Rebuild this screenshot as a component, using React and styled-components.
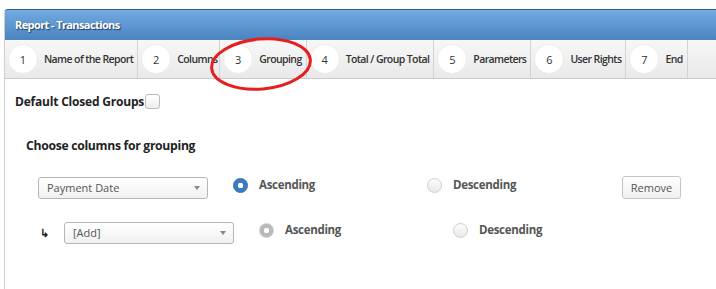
import React from 'react'
import styled, { createGlobalStyle } from 'styled-components'

const GlobalStyle = createGlobalStyle`
    html, body {
        margin: 0;
        background: #ffffff;
        font-family: "Open Sans", "Noto Sans", sans-serif;
    }
`

const steps = [
    { n: 1, label: 'Name of the Report' },
    { n: 2, label: 'Columns', clip: true },
    { n: 3, label: 'Grouping' },
    { n: 4, label: 'Total / Group Total' },
    { n: 5, label: 'Parameters' },
    { n: 6, label: 'User Rights' },
    { n: 7, label: 'End' },
]

function Radio({ checked, disabled, label }) {
    return (
        <RadioGroup>
            <RadioDot $checked={checked} $disabled={disabled} />
            <RadioLabel>{label}</RadioLabel>
        </RadioGroup>
    )
}

function SelectBox({ value }) {
    return (
        <Select>
            <span>{value}</span>
            <Caret />
        </Select>
    )
}

function App() {
    return (
        <Page>
            <GlobalStyle />
            <Panel>
                <Header>Report - Transactions</Header>
                <Steps>
                    {steps.map((s) => (
                        <Step key={s.n} $clip={s.clip}>
                            <StepNumber>{s.n}</StepNumber>
                            <StepLabel>{s.label}</StepLabel>
                        </Step>
                    ))}
                </Steps>
                <Content>
                    <CheckLine>
                        Default Closed Groups
                        <CheckBox />
                    </CheckLine>
                    <SectionTitle>Choose columns for grouping</SectionTitle>
                    <GroupRow>
                        <SelectBox value="Payment Date" />
                        <Radio checked label="Ascending" />
                        <Radio label="Descending" />
                        <Button>Remove</Button>
                    </GroupRow>
                    <GroupRow $indent>
                        <Arrow>↳</Arrow>
                        <SelectBox value="[Add]" />
                        <Radio checked disabled label="Ascending" />
                        <Radio disabled label="Descending" />
                    </GroupRow>
                </Content>
            </Panel>
            <Mark viewBox="0 0 110 60" width="110" height="60">
                <ellipse cx="55" cy="30" rx="49.5" ry="25" fill="none" stroke="#e3201f" strokeWidth="3" transform="rotate(-5 55 30)" />
            </Mark>
        </Page>
    )
}

const Page = styled.div`
    position: relative;
    padding: 9px 0 0 4px;
    height: 280px;
    overflow: hidden;
`

const Panel = styled.div`
    border-left: 1px solid #cfcfcf;
    border-top-left-radius: 3px;
    height: 100%;
`

const Header = styled.div`
    height: 30px;
    border-top: 1px solid #3a5f86;
    border-top-left-radius: 3px;
    background: linear-gradient(#72aae2, #4a84c0);
    color: #fff;
    font-size: 11px;
    font-weight: 700;
    line-height: 30px;
    padding-left: 10px;
    text-shadow: 1px 1px 1px #1d3c5c;
    letter-spacing: -0.6px;
`

const Steps = styled.div`
    display: flex;
    height: 38px;
    background: linear-gradient(#f7f7f7, #e9e9e9);
    border-bottom: 1px solid #cdcdcd;
`

const Step = styled.div`
    display: flex;
    align-items: center;
    gap: 6px;
    padding: 0 4px 0 3px;
    border-right: 1px solid #d3d3d3;
    ${(p) => p.$clip && 'width: 74px; overflow: hidden; white-space: nowrap;'}
`

const StepNumber = styled.div`
    width: 30px;
    height: 30px;
    flex: none;
    border-radius: 50%;
    background: #fff;
    border: 1px solid #ececec;
    box-sizing: border-box;
    display: flex;
    align-items: center;
    justify-content: center;
    font-size: 11px;
    color: #333;
`

const StepLabel = styled.span`
    font-size: 10.5px;
    font-weight: 600;
    color: #333;
    letter-spacing: -0.6px;
    white-space: nowrap;
`

const Content = styled.div`
    padding: 14px 0 0 10px;
`

const CheckLine = styled.div`
    display: flex;
    align-items: center;
    font-size: 12px;
    font-weight: 700;
    color: #222;
    letter-spacing: -0.2px;
    height: 16px;
`

const CheckBox = styled.span`
    width: 15px;
    height: 15px;
    margin-left: 1px;
    border: 1px solid #bbb;
    border-radius: 3px;
    background: linear-gradient(#fff, #eee);
    box-sizing: border-box;
`

const SectionTitle = styled.div`
    margin: 28px 0 0 11px;
    font-size: 12.2px;
    font-weight: 700;
    color: #222;
    letter-spacing: -0.3px;
`

const GroupRow = styled.div`
    display: flex;
    align-items: center;
    height: 23px;
    margin-top: 22px;
    padding-left: ${(p) => (p.$indent ? '25px' : '23px')};
`

const Arrow = styled.span`
    width: 24px;
    flex: none;
    font-size: 11px;
    font-weight: 700;
    color: #222;
`

const Select = styled.div`
    width: 170px;
    height: 22px;
    box-sizing: border-box;
    flex: none;
    display: flex;
    align-items: center;
    justify-content: space-between;
    padding: 0 7px 0 8px;
    border: 1px solid #b5b5b5;
    border-radius: 3px;
    background: linear-gradient(#fff, #f1f1f1);
    font-size: 11px;
    color: #555;
`

const Caret = styled.span`
    width: 0;
    height: 0;
    border-left: 3px solid transparent;
    border-right: 3px solid transparent;
    border-top: 4px solid #888;
`

const RadioGroup = styled.div`
    width: 194px;
    flex: none;
    display: flex;
    align-items: center;
    gap: 11px;
    margin: 0 0 5px 25px;
    & + & {
        margin-left: 0;
    }
`

const RadioDot = styled.span`
    width: 15px;
    height: 15px;
    border-radius: 50%;
    box-sizing: border-box;
    flex: none;
    border: 1px solid ${(p) => (p.$checked && !p.$disabled ? '#2f6aa8' : '#cfcfcf')};
    background: ${(p) =>
        p.$checked
            ? p.$disabled
                ? 'radial-gradient(circle, #fff 0 2.6px, #b9b9b9 3px)'
                : 'radial-gradient(circle, #fff 0 2.6px, #3a7cc2 3px)'
            : 'linear-gradient(#fdfdfd, #e8e8e8)'};
`

const RadioLabel = styled.span`
    font-size: 11.5px;
    font-weight: 700;
    color: #555;
    letter-spacing: -0.3px;
    margin-top: -2px;
`

const Button = styled.button`
    margin-left: 1px;
    width: 59px;
    height: 23px;
    border: 1px solid #c4c4c4;
    border-radius: 3px;
    background: linear-gradient(#fff, #f0f0f0);
    font-family: inherit;
    font-size: 11px;
    color: #555;
    padding: 0;
`

const Mark = styled.svg`
    position: absolute;
    left: 206px;
    top: 34px;
`

export default App
